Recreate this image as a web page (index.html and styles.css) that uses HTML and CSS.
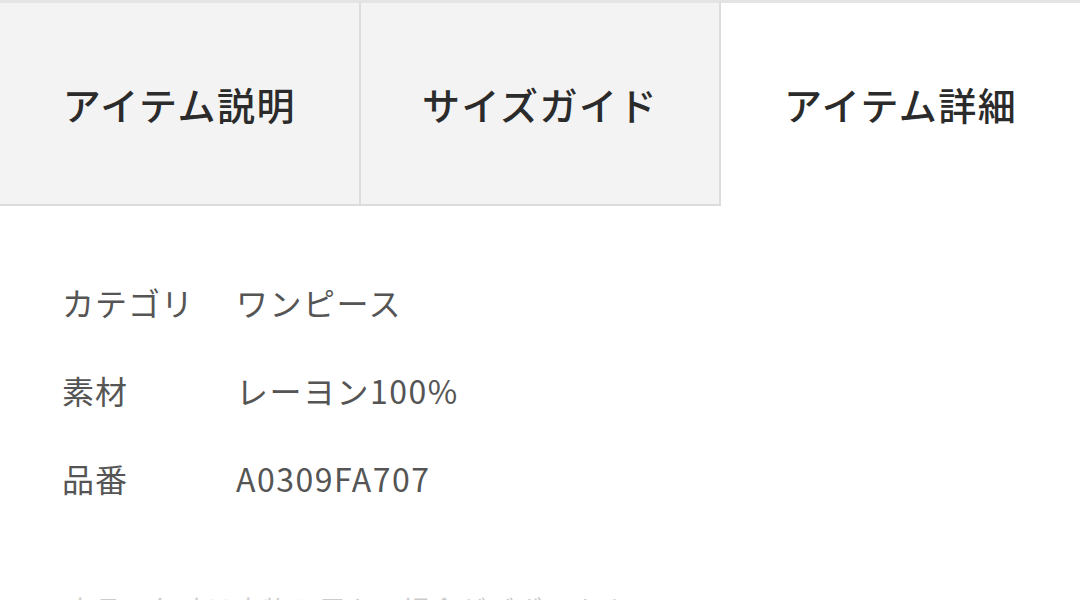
FILE: index.html
```html
<!DOCTYPE html>
<html lang="ja">
<head>
    <meta charset="UTF-8">
    <title>アイテム詳細</title>
    <link rel="stylesheet" href="styles.css">
</head>
<body>
<div class="tabs">
    <div class="tab">アイテム説明</div>
    <div class="tab">サイズガイド</div>
    <div class="tab active">アイテム詳細</div>
</div>
<div class="details">
    <div class="row">
        <span class="label">カテゴリ</span>
        <span class="value">ワンピース</span>
    </div>
    <div class="row">
        <span class="label">素材</span>
        <span class="value">レーヨン100%</span>
    </div>
    <div class="row">
        <span class="label">品番</span>
        <span class="value">A0309FA707</span>
    </div>
</div>
<p class="note">※ 商品の色味は実物と異なる場合がございます。</p>
</body>
</html>
```

FILE: styles.css
```css
html, body {
    margin: 0;
    padding: 0;
    background: white;
    font-family: "Noto Sans CJK JP", "Noto Sans", sans-serif;
    color: #333;
    overflow: hidden;
}

.tabs {
    display: flex;
    border-top: 3px solid #e4e4e4;
}

.tab {
    flex: 1;
    height: 201px;
    display: flex;
    align-items: center;
    justify-content: center;
    font-size: 38px;
    font-weight: 500;
    letter-spacing: 1.5px;
    color: #2b2b2b;
    background-color: #f3f3f3;
    border-right: 2px solid #dcdcdc;
    border-bottom: 2px solid #dcdcdc;
}

.tab.active {
    background-color: white;
    border-right: none;
    border-bottom-color: white;
}

.details {
    padding: 52px 0 0 62px;
}

.row {
    display: flex;
    align-items: center;
    height: 88px;
    font-size: 32px;
    letter-spacing: 1px;
    color: #555;
}

.label {
    width: 174px;
}

.value {
    letter-spacing: 1.5px;
}

.note {
    margin: 68px 0 0 32px;
    font-size: 28px;
    color: #ccc;
}
```
